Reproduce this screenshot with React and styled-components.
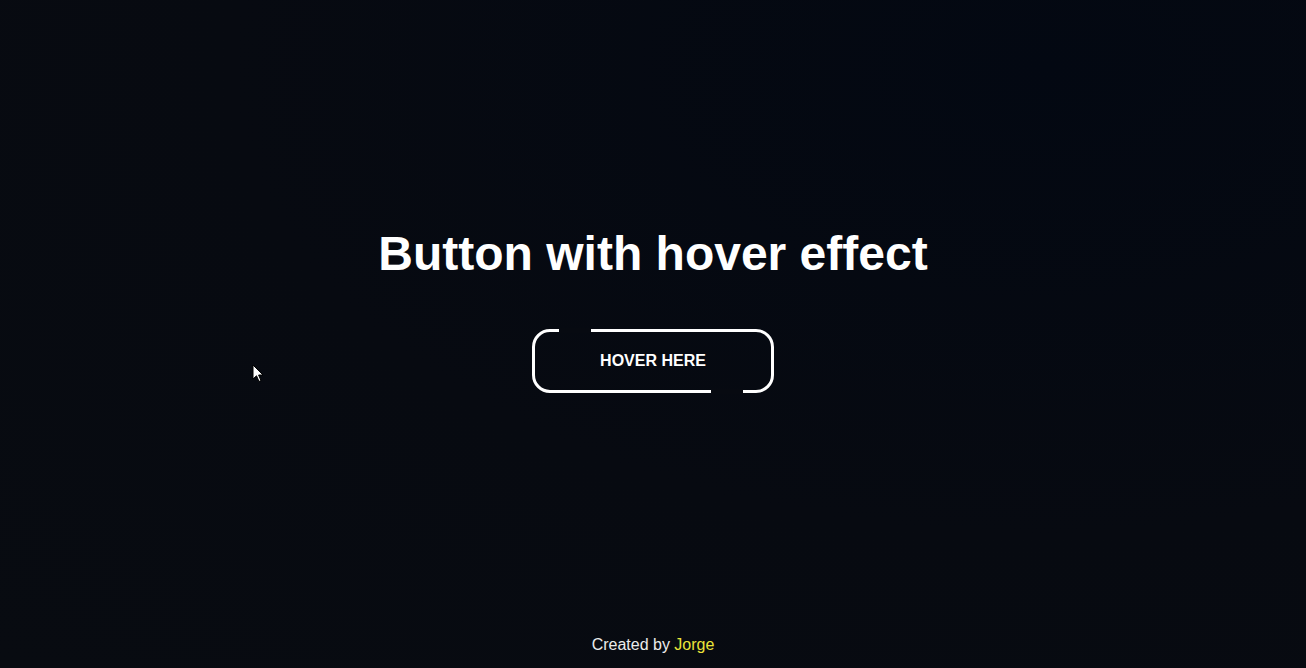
import React from "react";
import styled, { createGlobalStyle } from "styled-components";

const Global = createGlobalStyle`
  html, body {
    margin: 0;
    padding: 0;
    background: #060a11;
  }
  body {
    font-family: "Liberation Sans", Arial, sans-serif;
    color: #ffffff;
  }
`;

const Page = styled.div`
  position: relative;
  height: 100vh;
  display: flex;
  flex-direction: column;
  background: radial-gradient(ellipse at 80% 10%, #030812 0%, #070a11 55%, #080b11 100%);
  overflow: hidden;
`;

const Main = styled.main`
  flex: 1;
  display: flex;
  flex-direction: column;
  align-items: center;
  justify-content: center;
  padding-bottom: 18px;
`;

const Title = styled.h1`
  margin: 0 0 48px;
  font-size: 48px;
  line-height: 55px;
  font-weight: 700;
  color: #ffffff;
`;

const HoverButton = styled.button`
  position: relative;
  box-sizing: border-box;
  width: 242px;
  height: 64px;
  border: 3px solid #ffffff;
  border-radius: 18px;
  background: transparent;
  color: #ffffff;
  font-family: "Liberation Sans", Arial, sans-serif;
  font-size: 16px;
  font-weight: 700;
  text-transform: uppercase;
  cursor: pointer;
  padding: 0;

  &::before,
  &::after {
    content: "";
    position: absolute;
    width: 32px;
    height: 5px;
    background: #070a11;
  }
  &::before {
    top: -4px;
    left: 24px;
  }
  &::after {
    bottom: -4px;
    right: 28px;
  }
`;

const Footer = styled.footer`
  text-align: center;
  font-size: 16px;
  line-height: 18px;
  color: #ececec;
  padding-bottom: 14px;
`;

const Author = styled.span`
  color: #ebe43a;
`;

const Cursor = styled.svg`
  position: absolute;
  left: 252px;
  top: 364px;
  pointer-events: none;
`;

export default function App() {
  return (
    <>
      <Global />
      <Page>
        <Main>
          <Title>Button with hover effect</Title>
          <HoverButton>Hover here</HoverButton>
        </Main>
        <Footer>
          Created by <Author>Jorge</Author>
        </Footer>
        <Cursor width="12" height="19" viewBox="0 0 12 19">
          <path
            d="M1 1 L1 15 L4.5 11.8 L7 17.5 L9 16.6 L6.6 11 L11 11 Z"
            fill="#ffffff"
            stroke="#000000"
            strokeWidth="1"
            strokeLinejoin="round"
          />
        </Cursor>
      </Page>
    </>
  );
}
